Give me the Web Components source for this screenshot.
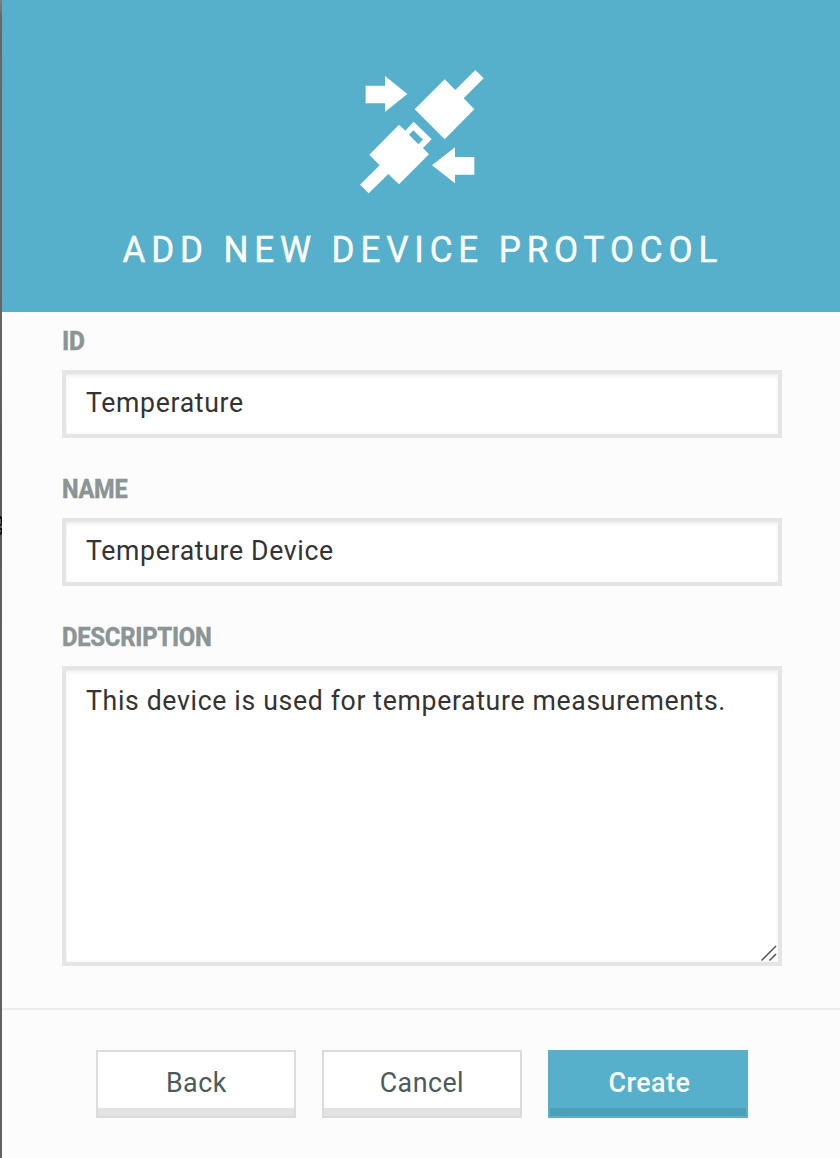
<!DOCTYPE html>
<html lang="en">
<head>
<meta charset="utf-8">
<title>Add new device protocol</title>
<style>
  html, body { margin: 0; height: 100%; overflow: hidden; }
  body { font-family: Roboto, "Liberation Sans", sans-serif; background: #fcfcfc; }
</style>
</head>
<body>
<protocol-dialog>
  <dialog-header slot="header">ADD NEW DEVICE PROTOCOL</dialog-header>
  <form-field label="ID" style="--label-scale:.98">Temperature</form-field>
  <form-field label="NAME" style="--label-scale:.94">Temperature Device</form-field>
  <form-field label="DESCRIPTION" multiline>This device is used for temperature measurements.</form-field>
  <action-button slot="actions">Back</action-button>
  <action-button slot="actions">Cancel</action-button>
  <action-button slot="actions" primary>Create</action-button>
</protocol-dialog>
<script>
class BaseElement extends HTMLElement {
  constructor() {
    super();
    this.attachShadow({ mode: 'open' }).innerHTML = this.template();
  }
}

customElements.define('protocol-dialog', class extends BaseElement {
  template() {
    return `<style>
      :host { display: grid; grid-template-columns: 2px minmax(0, 1fr); width: 840px; height: 1158px; overflow: hidden; }
      .backdrop { background: linear-gradient(#817b7b 0, #777272 12px, #6b6767 13px, #686565 310px, #5b5b5b 450px, #616161 800px, #626262 100%); padding-top: 516px; box-sizing: border-box; }
      .backdrop svg { display: block; }
      .panel { display: flex; flex-direction: column; background: #fcfcfc; }
      .fields { box-sizing: border-box; height: 696px; padding: 14px 58px 0 60px; }
      footer { box-sizing: border-box; flex: 1; border-top: 2px solid #ededed; display: flex; justify-content: center; gap: 26px; padding: 40px 0 0 2px; align-items: flex-start; }
    </style>
    <div class="backdrop"><svg width="2" height="20"><path d="M0 0H1L2 2V8L1 10H0V8H1V3H0ZM0 12H2V17L1 19H0V16H1V14H0Z" fill="#111"/></svg></div>
    <div class="panel"><slot name="header"></slot>
      <div class="fields"><slot></slot></div>
      <footer><slot name="actions"></slot></footer></div>`;
  }
});

customElements.define('dialog-header', class extends BaseElement {
  template() {
    return `<style>
      :host { display: flex; flex-direction: column; align-items: center; height: 312px; box-sizing: border-box; padding-top: 60px; background: #56b0cb; color: #fff; }
      svg { display: block; width: 145px; height: 140px; margin-left: 3px; }
      h1 { margin: 29px 0 0; font-size: 36.5px; line-height: 42px; font-weight: 400; letter-spacing: 6.1px; white-space: nowrap; padding-left: 3px; transform: scaleX(.96); -webkit-text-stroke: .4px #fff; }
    </style>
    <svg viewBox="0 0 435 420" fill="#fff" aria-hidden="true">
      <path d="M47 77H105V48L172 102L105 156V130H47Z"/>
      <path d="M284 58L316 90L376 30L401 55L341 115L373 148L284 238L194 148Z"/>
      <path fill-rule="evenodd" d="M147 194L166 212L191 185L245 238L219 264L237 283L147 373L115 342L56 400L30 374L89 316L58 284ZM190 211L177 224L205 253L219 239Z"/>
      <path d="M373 291H315V262L246 316L315 370V344H373Z"/>
    </svg>
    <h1><slot></slot></h1>`;
  }
});

customElements.define('form-field', class extends BaseElement {
  template() {
    return `<style>
      :host { display: block; margin-bottom: 36px; }
      .label { height: 32px; line-height: 32px; font-size: 25px; font-weight: 800; color: #8b9595; letter-spacing: -.3px; margin-bottom: 12px; transform: scaleX(var(--label-scale, .955)); transform-origin: 0 0; -webkit-text-stroke: .3px #8b9595; }
      .box { position: relative; box-sizing: border-box; height: 68px; border: 4px solid #e4e6e5; background: #fff; padding: 12px 20px 0; font-size: 28.5px; line-height: 34px; color: #333; letter-spacing: .7px; box-shadow: inset 0 4px 4px -2px #eee, inset 0 0 3px #f0f0f0; white-space: nowrap; }
      .value { display: inline-block; transform: scaleX(.935); transform-origin: 0 0; }
      :host([multiline]) .box { height: 300px; padding-top: 14px; }
      svg { display: none; position: absolute; right: 0; bottom: 0; }
      :host([multiline]) svg { display: block; }
    </style>
    <div class="label"></div>
    <div class="box"><span class="value"><slot></slot></span><svg width="18" height="18" fill="none" stroke="#555" stroke-width="1.5"><path d="M1.5 16.5L16 2M9.5 16.5L16 10"/></svg></div>`;
  }
  connectedCallback() {
    this.shadowRoot.querySelector('.label').textContent = this.getAttribute('label');
  }
});

customElements.define('action-button', class extends BaseElement {
  template() {
    return `<style>
      :host { display: block; width: 200px; height: 68px; }
      button { display: block; width: 100%; height: 100%; box-sizing: border-box; margin: 0; padding: 0 0 2px; border: 2px solid #d8dddc; border-radius: 0; background: #fff; box-shadow: inset 0 -8px #e3e3e3; color: #4b5b5b; font: 400 28.5px/60px Roboto, "Liberation Sans", sans-serif; letter-spacing: .5px; text-align: center; }
      span { display: inline-block; transform: scaleX(.94); }
      :host([primary]) button { background: #56b0cb; border-color: #56b0cb; box-shadow: inset 0 -8px #4d9eb6; color: #fff; font-weight: 500; padding-left: 2px; }
    </style>
    <button type="button"><span><slot></slot></span></button>`;
  }
});
</script>
</body>
</html>
